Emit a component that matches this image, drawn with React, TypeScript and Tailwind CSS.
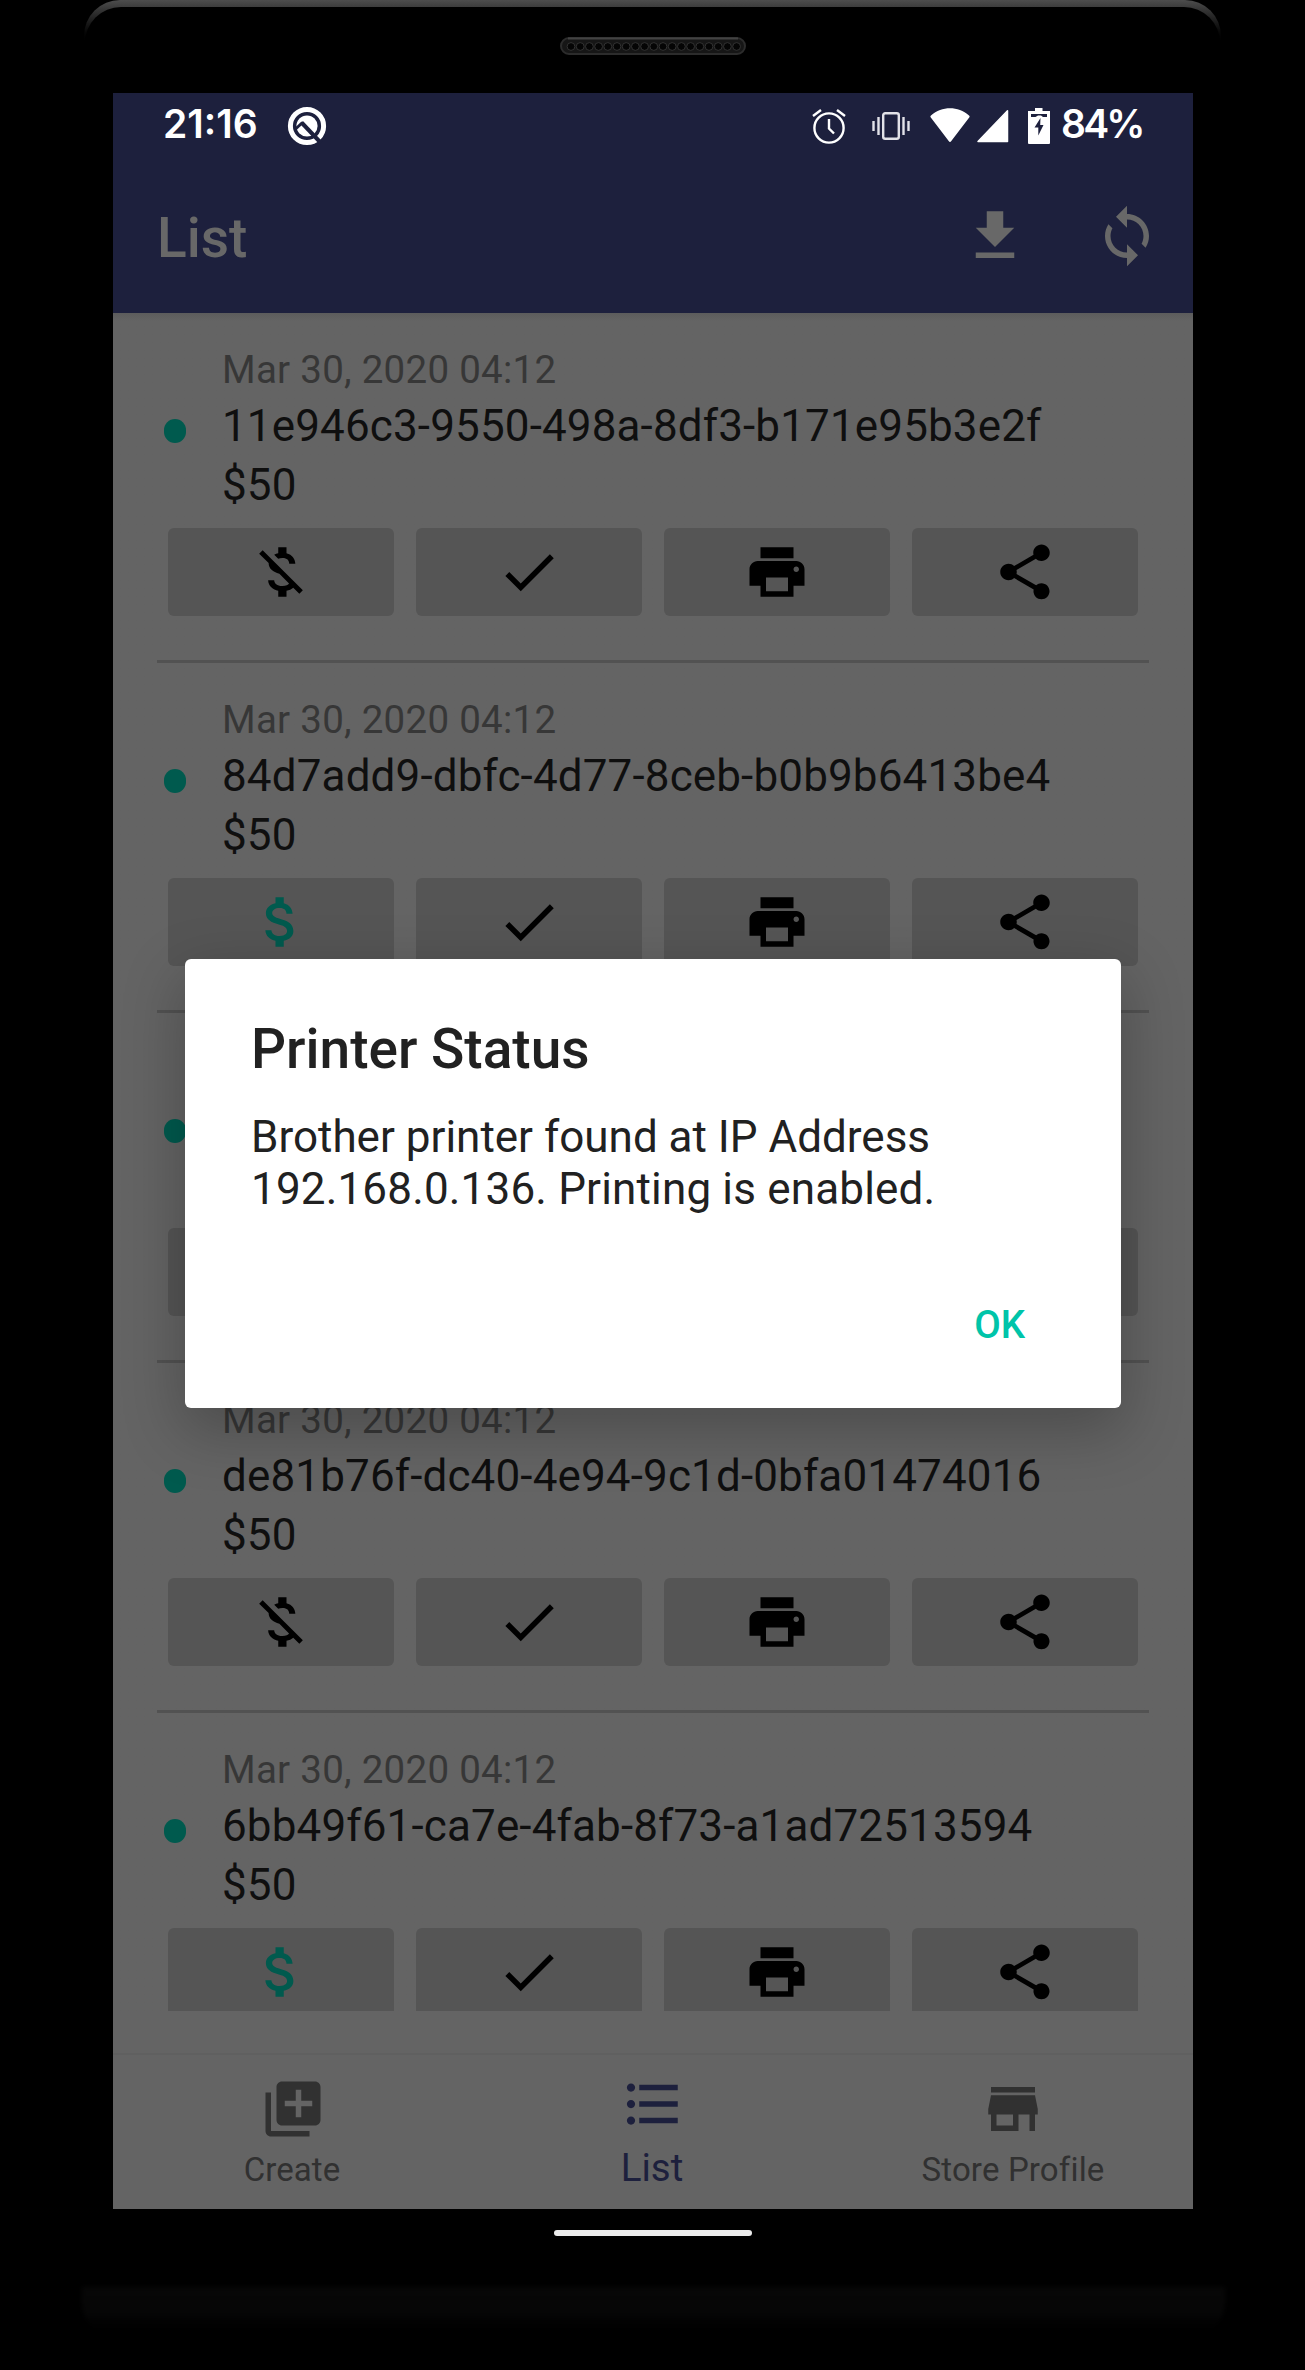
import type { ReactNode } from 'react';

const ICONS = {
    download: "M19 9h-4V3H9v6H5l7 7 7-7zM5 18v2h14v-2H5z",
    sync: "M12 4V1L8 5l4 4V6c3.31 0 6 2.69 6 6 0 1.01-.25 1.97-.7 2.8l1.46 1.46C19.54 15.03 20 13.57 20 12c0-4.42-3.58-8-8-8zm0 14c-3.31 0-6-2.69-6-6 0-1.01.25-1.97.7-2.8L5.24 7.74C4.46 8.97 4 10.43 4 12c0 4.42 3.58 8 8 8v3l4-4-4-4v3z",
    moneyOff: "M12.5 6.9c1.78 0 2.44.85 2.5 2.1h2.21c-.07-1.72-1.12-3.3-3.21-3.81V3h-3v2.16c-.53.12-1.03.3-1.48.54l1.47 1.47c.41-.17.91-.27 1.51-.27zM5.33 4.06L4.06 5.33 7.5 8.77c0 2.08 1.56 3.21 3.91 3.91l3.51 3.51c-.34.48-1.05.91-2.42.91-2.06 0-2.87-.92-2.98-2.1h-2.2c.12 2.19 1.76 3.42 3.68 3.83V21h3v-2.15c.96-.18 1.82-.55 2.45-1.12l2.22 2.22 1.27-1.27L5.33 4.06z",
    money: "M11.8 10.9c-2.27-.59-3-1.2-3-2.15 0-1.09 1.01-1.85 2.7-1.85 1.78 0 2.44.85 2.5 2.1h2.21c-.07-1.72-1.12-3.3-3.21-3.81V3h-3v2.16c-1.94.42-3.5 1.68-3.5 3.61 0 2.31 1.91 3.46 4.7 4.13 2.5.6 3 1.48 3 2.41 0 .69-.49 1.79-2.7 1.79-2.06 0-2.87-.92-2.98-2.1h-2.2c.12 2.19 1.76 3.42 3.68 3.83V21h3v-2.15c1.95-.37 3.5-1.5 3.5-3.55 0-2.84-2.43-3.81-4.7-4.4z",
    check: "M9 16.17L4.83 12l-1.42 1.41L9 19 21 7l-1.41-1.41z",
    print: "M19 8H5c-1.66 0-3 1.34-3 3v6h4v4h12v-4h4v-6c0-1.66-1.34-3-3-3zm-3 11H8v-5h8v5zm3-7c-.55 0-1-.45-1-1s.45-1 1-1 1 .45 1 1-.45 1-1 1zm-1-9H6v4h12V3z",
    share: "M18 16.08c-.76 0-1.44.3-1.96.77L8.91 12.7c.05-.23.09-.46.09-.7s-.04-.47-.09-.7l7.05-4.11c.54.5 1.25.81 2.04.81 1.66 0 3-1.34 3-3s-1.34-3-3-3-3 1.34-3 3c0 .24.04.47.09.7L8.04 9.81C7.5 9.31 6.79 9 6 9c-1.66 0-3 1.34-3 3s1.34 3 3 3c.79 0 1.5-.31 2.04-.81l7.12 4.16c-.05.21-.08.43-.08.65 0 1.61 1.31 2.92 2.92 2.92 1.61 0 2.92-1.31 2.92-2.92s-1.31-2.92-2.92-2.92z",
    create: "M4 6H2v14c0 1.1.9 2 2 2h14v-2H4V6zm16-4H8c-1.1 0-2 .9-2 2v12c0 1.1.9 2 2 2h12c1.1 0 2-.9 2-2V4c0-1.1-.9-2-2-2zm-1 9h-4v4h-2v-4H9V9h4V5h2v4h4v2z",
    list: "M4 10.5c-.83 0-1.5.67-1.5 1.5s.67 1.5 1.5 1.5 1.5-.67 1.5-1.5-.67-1.5-1.5-1.5zm0-6c-.83 0-1.5.67-1.5 1.5S3.17 7.5 4 7.5 5.5 6.83 5.5 6 4.83 4.5 4 4.5zm0 12c-.83 0-1.5.68-1.5 1.5s.68 1.5 1.5 1.5 1.5-.68 1.5-1.5-.67-1.5-1.5-1.5zM7 19h14v-2H7v2zm0-6h14v-2H7v2zm0-8v2h14V5H7z",
    store: "M20 4H4v2h16V4zm1 10v-2l-1-5H4l-1 5v2h1v6h10v-6h4v6h2v-6h1zm-9 4H6v-4h6v4z",
};

const rows = [
    { id: "11e946c3-9550-498a-8df3-b171e95b3e2f", date: "Mar 30, 2020 04:12", total: "$50", paid: false },
    { id: "84d7add9-dbfc-4d77-8ceb-b0b9b6413be4", date: "Mar 30, 2020 04:12", total: "$50", paid: true },
    { id: "", date: "", total: "", paid: false },
    { id: "de81b76f-dc40-4e94-9c1d-0bfa01474016", date: "Mar 30, 2020 04:12", total: "$50", paid: false },
    { id: "6bb49f61-ca7e-4fab-8f73-a1ad72513594", date: "Mar 30, 2020 04:12", total: "$50", paid: true },
];

function Icon({ name, className = "" }: { name: keyof typeof ICONS; className?: string }) {
    return (
        <svg viewBox="0 0 24 24" className={`size-[66px] shrink-0 fill-current ${className}`}>
            <path d={ICONS[name]} />
        </svg>
    );
}

function Speaker() {
    return (
        <svg viewBox="0 0 186 18" className="ml-[560px] mt-[37px] h-[18px] w-[186px]">
            <rect x="1" y="1" width="184" height="16" rx="8" fill="#161616" stroke="#2c2c2c" strokeWidth="2" />
            <path d="M8 1.5h170" stroke="#424242" strokeWidth="2" />
            {Array.from({ length: 19 }, (_, i) => (
                <circle key={i} cx={11 + i * 9.2} cy="9.5" r="3.9" fill="#050505" stroke="#333" strokeWidth="1" />
            ))}
        </svg>
    );
}

function StatusBar() {
    return (
        <div className="flex h-[66px] items-center pl-[50px] pr-[50px] font-['Inter'] text-[39px] font-semibold text-white">
            <span className="-mt-[3px] w-[95px] whitespace-nowrap">21:16</span>
            <svg viewBox="0 0 40 40" className="ml-[29px] size-10">
                <circle cx="20" cy="20" r="16.6" fill="none" stroke="#fff" strokeWidth="5" />
                <circle cx="20" cy="20" r="10.6" fill="#fff" />
                <path d="M14.5 16.5L34 37" stroke="#1d203d" strokeWidth="4" />
                <path d="M8 23.5l7.500-7" stroke="#1d203d" strokeWidth="3" />
            </svg>
            <svg viewBox="0 0 36 36" className="ml-auto mr-[24px] size-9" fill="none" stroke="#fff" strokeWidth="2.4">
                <circle cx="18" cy="20" r="14.6" />
                <path d="M18 11v9.5l5 5M2 8l8-6M34 8l-8-6" />
            </svg>
            <svg viewBox="0 0 40 30" className="mr-[19px] h-[30px] w-10" fill="none" stroke="#e2e2e8" strokeWidth="2.4">
                <rect x="12.2" y="2.2" width="15.6" height="25.6" rx="2" />
                <path d="M7.5 6v18M2.5 10v10M32.5 6v18M37.5 10v10" />
            </svg>
            <svg viewBox="0 0 40 34" className="-mt-[2px] mr-[6px] h-[34px] w-10">
                <path d="M.8 9.5a1.4 1.4 0 0 1 .2-2C12-2.1 28-2.1 39 7.5a1.4 1.4 0 0 1 .2 2L21.3 33a1.600 1.600 0 0 1-2.600 0z" fill="#fff" />
            </svg>
            <svg viewBox="0 0 33 33" className="mr-[19px] size-[33px]">
                <path d="M31.5.8v30.700H2z" fill="#fff" stroke="#fff" strokeWidth="1.5" strokeLinejoin="round" />
            </svg>
            <svg viewBox="0 0 22 36" className="mr-[11px] h-9 w-[22px]">
                <path d="M7 0h7.5v3H22v32a1 1 0 0 1-1 1H1a1 1 0 0 1-1-1V3h7z" fill="#fff" />
                <path d="M3 6h16v3h-4l-2-1.5h-3L7.5 9H3zM12.5 10l-6 9.500h3.800v8l5.200-10.500h-3.300z" fill="#1d203d" />
            </svg>
            <span className="-mt-[3px] w-[82px] whitespace-nowrap tracking-[-2.8px]">84%</span>
        </div>
    );
}

function ActionButton({ children }: { children: ReactNode }) {
    return (
        <button className="flex h-[88px] items-center justify-center rounded-md bg-[#555555] text-black">
            {children}
        </button>
    );
}

function Row({ id, date, total, paid }: (typeof rows)[number]) {
    return (
        <li className="h-[350px] px-11">
            <div className="flex h-[347px] flex-col pt-[31px]">
                <div className="flex h-[170px] pl-[7px]">
                    <span className="mt-[75px] h-6 w-[22px] rounded-[11px] bg-[#005a4e]" />
                    <div className="ml-[36px] whitespace-nowrap text-[44px] leading-[59px] tracking-[0.14px] text-[#0f0f0f]">
                        <p className="mb-[2px] text-[38.5px] leading-[51px] tracking-[0.27px] text-[#373737]">{date}</p>
                        <p>{id}</p>
                        <p>{total}</p>
                    </div>
                </div>
                <div className="mx-[11px] mt-[14px] grid grid-cols-4 gap-[22px]">
                    <ActionButton>
                        <Icon name={paid ? "money" : "moneyOff"} className={paid ? "text-[#005a4e]" : ""} />
                    </ActionButton>
                    <ActionButton><Icon name="check" /></ActionButton>
                    <ActionButton><Icon name="print" /></ActionButton>
                    <ActionButton><Icon name="share" /></ActionButton>
                </div>
            </div>
            <div className="h-[3px] bg-[#525252]" />
        </li>
    );
}

function PrinterDialog() {
    return (
        <div role="dialog" className="absolute left-[72px] top-[866px] flex h-[449px] w-[936px] flex-col rounded-md bg-white px-[66px] pt-[57px] text-[#212121] shadow-[0_20px_60px_4px_rgba(0,0,0,0.24)]">
            <h2 className="text-[55px] font-medium leading-[66px]">Printer Status</h2>
            <p className="mt-[29px] text-[44px] leading-[52px]">
                Brother printer found at IP Address<br />
                <span className="tracking-[0.17px]">192.168.0.136. Printing is enabled.</span>
            </p>
            <button className="mr-[30px] mt-[85px] self-end text-[38.5px] font-medium leading-[50px] text-[#00c4a9]">OK</button>
        </div>
    );
}

export default function App() {
    return (
        <main className="relative flex h-[2370px] w-[1305px] flex-col overflow-hidden bg-black font-['Roboto',sans-serif]">
            {/* phone case edges */}
            <div className="absolute left-[84px] top-0 h-[46px] w-[1137px] rounded-t-[36px] bg-gradient-to-b from-[#4d4d4d] to-black">
                <div className="mx-px translate-y-[7px] h-[43px] rounded-t-[36px] bg-black" />
            </div>
            <div className="absolute left-[82px] top-[2287px] h-[54px] w-[1143px] rounded-b-[40px] bg-gradient-to-b from-[#070707] via-[#060606] to-black blur-[2px]" />

            <div className="relative h-[93px] shrink-0">
                <Speaker />
            </div>

            <div className="relative ml-[113px] flex h-[2116px] w-[1080px] shrink-0 flex-col bg-[#646464]">
                <header className="h-[220px] shrink-0 bg-[#1d203d]">
                    <StatusBar />
                    <div className="flex h-[154px] items-center pl-11 pr-[33px] text-[#686868]">
                        <h1 className="mt-[5px] text-[55px] font-medium">List</h1>
                        <Icon name="download" className="ml-auto mr-[66px]" />
                        <Icon name="sync" />
                    </div>
                </header>

                <ul className="h-[1698px] shrink-0 overflow-hidden bg-gradient-to-b from-[#5c5c5c] to-[#646464] to-[8px]">
                    {rows.map((r, idx) => <Row key={idx} {...r} />)}
                </ul>

                <nav className="mt-[42px] grid h-[156px] grid-cols-3 border-t-2 border-[#606060] text-[33px] leading-[40px] text-[#313131]">
                    <div className="flex flex-col items-center pt-[21px]">
                        <Icon name="create" />
                        <span className="mt-[8px] pr-[2px] tracking-[0.1px]">Create</span>
                    </div>
                    <div className="flex flex-col items-center pt-[16px] text-[#1d203d]">
                        <Icon name="list" />
                        <span className="mt-[11px] pr-[2px] text-[38.5px]">List</span>
                    </div>
                    <div className="flex flex-col items-center pt-[21px]">
                        <Icon name="store" />
                        <span className="mt-[8px] tracking-[0.15px]">Store Profile</span>
                    </div>
                </nav>

                <PrinterDialog />
            </div>

            <div className="mx-auto mt-[21px] h-[6px] w-[198px] rounded-full bg-[#ebebeb]" />
        </main>
    );
}
